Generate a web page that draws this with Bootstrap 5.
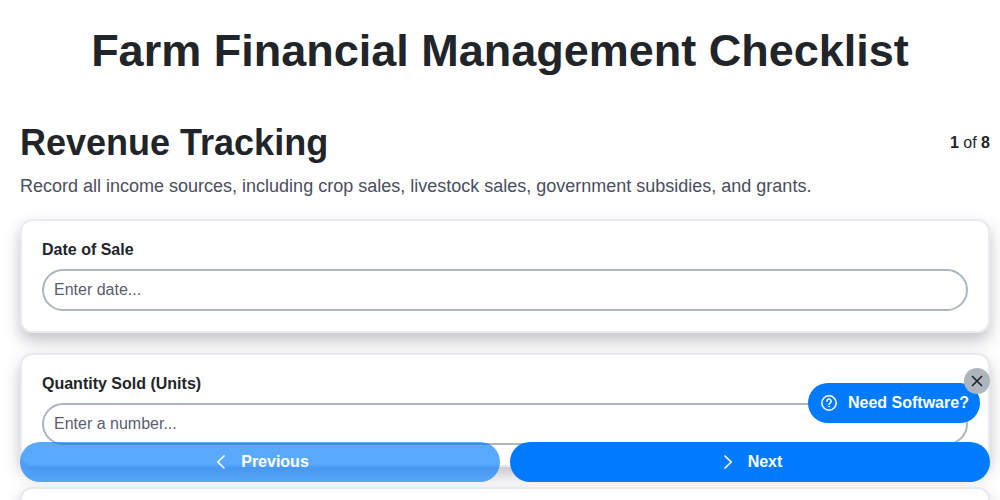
<!DOCTYPE html>
<html lang="en">
<head>
<meta charset="utf-8">
<title>Farm Financial Management Checklist</title>
<link href="https://cdn.jsdelivr.net/npm/bootstrap@5.3.0/dist/css/bootstrap.min.css" rel="stylesheet">
<style>
html, body { height: 100%; overflow: hidden; }
body { font-family: "Liberation Sans", Arial, sans-serif; color: #212529; background: #fff; }
.page-wrap { padding: 21px 10px 0 20px; }
.main-title { font-size: 45px; font-weight: 700; line-height: 60px; margin: 0 10px 40px 0; text-align: center; }
.sect-title { font-size: 36px; font-weight: 700; line-height: 43px; margin: 0; }
.step-count { font-size: 16px; line-height: 24px; }
.sect-desc { font-size: 18px; line-height: 27px; color: #4a4d5e; margin: 9px 0 19px; }
.field-card { border: 2px solid #e9e9f0; border-radius: 12px; background: #fff; padding: 19px 20px 20px; margin-bottom: 20px; box-shadow: 0 8px 16px rgba(40,40,60,.28); }
.field-label { font-size: 16px; font-weight: 700; line-height: 20px; margin-bottom: 9px; display: block; }
.field-input { height: 42px; border: 2px solid #adb5bd; border-radius: 21px; padding: 0 10px; font-size: 16px; box-shadow: none; }
.field-input::placeholder { color: #5a5d70; opacity: 1; }
.bottom-bar { position: fixed; left: 20px; right: 10px; top: 442px; gap: 10px; }
.step-btn { flex: 1 1 0; height: 40px; border: 0; border-radius: 20px; background: #007bff; color: #fff; font-size: 16px; font-weight: 700; padding: 0 0 0 4px; display: flex; align-items: center; justify-content: center; gap: 14px; }
.step-btn.is-off { opacity: .65; background: #007bff; color: #fff; }
.help-pill { position: fixed; left: 808px; top: 383px; width: 172px; height: 40px; border: 0; border-radius: 20px; background: #007bff; color: #fff; font-size: 16px; font-weight: 700; display: flex; align-items: center; padding: 0 0 0 13px; gap: 11px; white-space: nowrap; }
.help-close { position: fixed; left: 964px; top: 368px; width: 26px; height: 26px; border: 0; border-radius: 50%; background: #adb5bd; padding: 0; display: flex; align-items: center; justify-content: center; }
</style>
</head>
<body>
<div class="page-wrap">
  <h1 class="main-title">Farm Financial Management Checklist</h1>
  <div class="d-flex justify-content-between align-items-center">
    <h2 class="sect-title">Revenue Tracking</h2>
    <div class="step-count"><strong>1</strong> of <strong>8</strong></div>
  </div>
  <p class="sect-desc">Record all income sources, including crop sales, livestock sales, government subsidies, and grants.</p>
  <div class="field-card">
    <label class="field-label" for="f1">Date of Sale</label>
    <input id="f1" class="form-control field-input" type="text" placeholder="Enter date...">
  </div>
  <div class="field-card">
    <label class="field-label" for="f2">Quantity Sold (Units)</label>
    <input id="f2" class="form-control field-input" type="text" placeholder="Enter a number...">
  </div>
  <div class="field-card"></div>
</div>
<div class="bottom-bar d-flex">
  <button type="button" class="step-btn is-off">
    <svg width="12" height="16" viewBox="0 0 12 16" fill="none" stroke="#fff" stroke-width="1.7" stroke-linecap="round" stroke-linejoin="round"><path d="M9 2 2.8 8 9 14"/></svg>
    <span>Previous</span>
  </button>
  <button type="button" class="step-btn">
    <svg width="12" height="16" viewBox="0 0 12 16" fill="none" stroke="#fff" stroke-width="1.7" stroke-linecap="round" stroke-linejoin="round"><path d="M3 2 9.2 8 3 14"/></svg>
    <span>Next</span>
  </button>
</div>
<button type="button" class="help-pill">
  <svg width="16" height="16" viewBox="0 0 16 16" fill="none" stroke="#fff" stroke-width="1.5" stroke-linecap="round"><circle cx="8" cy="8" r="7.2"/><path d="M5.9 6.2a2.1 2.1 0 1 1 3.2 1.8c-.7.4-1.1.8-1.1 1.6"/><circle cx="8" cy="11.6" r=".5" fill="#fff" stroke-width=".5"/></svg>
  <span>Need Software?</span>
</button>
<button type="button" class="help-close" aria-label="Close">
  <svg width="12" height="12" viewBox="0 0 12 12" fill="none" stroke="#212529" stroke-width="1.7" stroke-linecap="round"><path d="M1.5 1.5l9 9M10.5 1.5l-9 9"/></svg>
</button>
<script src="https://cdn.jsdelivr.net/npm/bootstrap@5.3.0/dist/js/bootstrap.bundle.min.js"></script>
</body>
</html>
